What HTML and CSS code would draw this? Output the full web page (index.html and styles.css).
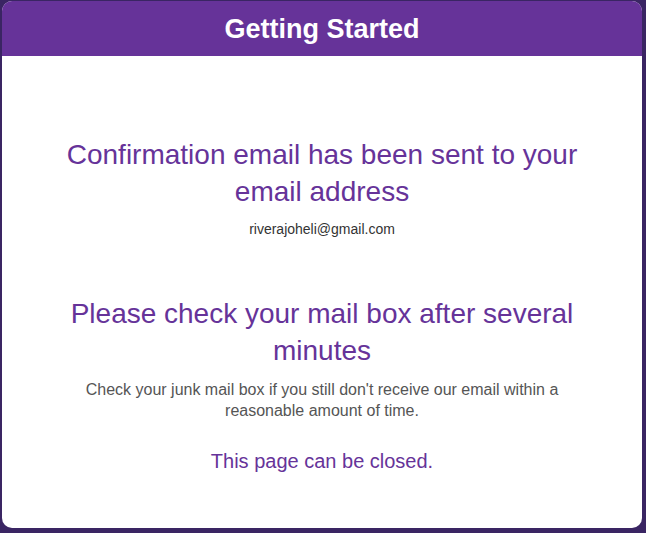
FILE: index.html
```html
<!DOCTYPE html>
<html>
<head>
<meta charset="utf-8">
<link rel="stylesheet" href="styles.css">
</head>
<body>
<div class="card">
  <header class="card-header">Getting Started</header>
  <main class="card-body">
    <h2 class="title first">Confirmation email has been sent to your email address</h2>
    <p class="email">riverajoheli@gmail.com</p>
    <h2 class="title second">Please check your mail box after several minutes</h2>
    <p class="note">Check your junk mail box if you still don't receive our email within a reasonable amount of time.</p>
    <p class="closed">This page can be closed.</p>
  </main>
</div>
</body>
</html>
```
FILE: styles.css
```css
html, body {
  margin: 0;
  height: 100%;
}
body {
  background: #3a2563;
  padding: 1px 4px 5px 2px;
  box-sizing: border-box;
  font-family: "Liberation Sans", Arial, sans-serif;
}
.card {
  background: #fff;
  border-radius: 10px;
  overflow: hidden;
  height: 527px;
  width: 640px;
}
.card-header {
  background: #663399;
  color: #fff;
  font-weight: bold;
  font-size: 27px;
  height: 55px;
  box-sizing: border-box;
  padding-top: 2px;
  line-height: 53px;
  text-align: center;
}
.card-body {
  padding: 80px 50px 0;
  text-align: center;
}
.title {
  margin: 0;
  font-weight: normal;
  font-size: 28px;
  line-height: 37px;
  color: #663399;
}
.email {
  margin: 11px 0 0;
  font-size: 14px;
  line-height: 16px;
  color: #333;
}
.second {
  margin-top: 58px;
}
.note {
  margin: 10px 0 0;
  font-size: 16px;
  line-height: 21px;
  color: #555;
}
.closed {
  margin: 29px 0 0;
  font-size: 20px;
  line-height: 23px;
  color: #663399;
}
```
